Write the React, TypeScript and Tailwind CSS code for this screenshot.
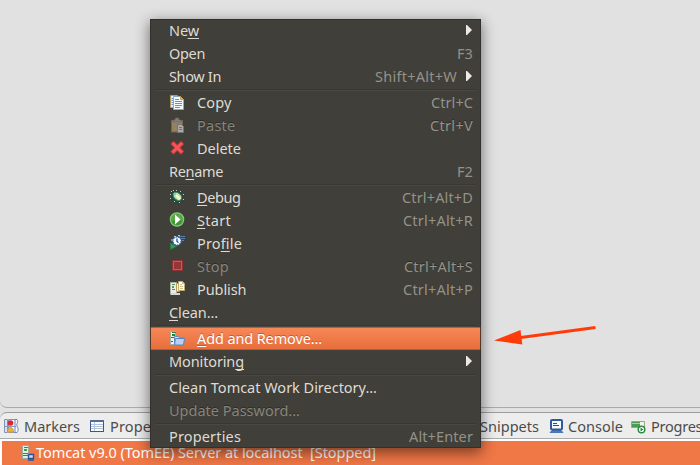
import { useLayoutEffect, useRef } from 'react';
import type { ReactNode } from 'react';

/** Text run whose tracking is adjusted so that it takes up the given width. */
function Fit({ w, children, className = '' }: { w: number; children: ReactNode; className?: string }) {
  const ref = useRef<HTMLSpanElement>(null);
  useLayoutEffect(() => {
    const el = ref.current;
    if (!el) return;
    el.style.letterSpacing = '0px';
    const n = (el.textContent ?? '').length;
    el.style.letterSpacing = `${(w - el.getBoundingClientRect().width) / n}px`;
  }, [w]);
  return (
    <span ref={ref} className={`inline-block whitespace-pre ${className}`}>
      {children}
    </span>
  );
}

function Svg({ children, className = '' }: { children: ReactNode; className?: string }) {
  return (
    <svg viewBox="0 0 16 16" className={`size-4 shrink-0 ${className}`}>
      {children}
    </svg>
  );
}

const CopyIcon = () => (
  <Svg>
    <path d="M1.500 1.500h7v12h-7z" fill="#e8eef5" stroke="#b59a5b" />
    <path d="M2.500 4.500h2M2.500 6.500h2M2.500 8.500h2M2.500 10.500h2" stroke="#6d94bf" />
    <path d="M4.500 2.500h7l3 3v10h-10z" fill="#f4f9ff" stroke="#8ba9c4" />
    <path d="M11.500 2.500v3h3z" fill="#edc568" stroke="#c19a43" />
    <path d="M6 5.500h4M6 7.500h7M6 9.500h7M6 11.500h7M6 13.500h5" stroke="#6592c3" />
  </Svg>
);
const PasteIcon = () => (
  <Svg>
    <rect x="2.500" y="3.500" width="11" height="11.500" fill="#94815f" stroke="#76644a" />
    <path d="M4 5V3h2l.5-2h3l.5 2h2v2z" fill="#7d7d7b" stroke="#696966" strokeWidth=".6" />
    <path d="M8.500 7.500h4l2 2v6h-6z" fill="#a9aaa7" stroke="#6e7579" />
    <path d="M10 10.500h3M10 12.500h3" stroke="#667584" />
  </Svg>
);
const DeleteIcon = () => (
  <Svg>
    <path d="M4.500 4l7.500 7.500M12 4l-7.500 7.500" stroke="#c93236" strokeWidth="4.600" strokeLinecap="square" />
    <path d="M4.500 4l7.500 7.500M12 4l-7.500 7.500" stroke="#f4575a" strokeWidth="2.800" strokeLinecap="square" />
  </Svg>
);
const DebugIcon = () => (
  <Svg>
    <path
      d="M3 3l4 3M8 1v4M13 3l-3 2M1 6l5 1M2 10l4-1M4 13l3-3M8 11v3M13 7h2M12 11l2 2"
      stroke="#14504a"
      strokeWidth="1.500"
    />
    <path
      d="M2 2h1v1H2zM4 1h1v1H4zM7 1h1v1H7zM11 2h1v1h-1zM1 5h1v1H1zM1 9h1v1H1zM14 5h1v1h-1zM14 10h1v1h-1zM5 12h1v1H5zM10 13h1v1h-1z"
      fill="#b4d6c4"
    />
    <ellipse cx="8.500" cy="7.500" rx="4.600" ry="3.400" transform="rotate(40 8.500 7.500)" fill="#c5e7a4" stroke="#3d7d50" />
    <path d="M7 6l4 4" stroke="#f7ffe0" strokeWidth="2" />
    <circle cx="5.800" cy="5" r="1.500" fill="#8fcbb6" />
  </Svg>
);
const StartIcon = () => (
  <Svg>
    <circle cx="8" cy="7.500" r="6.700" fill="#55ab42" stroke="#8cc580" strokeWidth="1.200" />
    <path d="M2.500 8.500a5.600 5.600 0 0 0 11 0z" fill="#3f9731" />
    <path d="M6 2.500l5.500 5-5.500 5z" fill="#fff" />
  </Svg>
);
const ProfileIcon = () => (
  <Svg>
    <path d="M10 1.500h6M12 3.500h4M13 5.500h2" stroke="#5e7ca6" />
    <path d="M1.500 8l6 3.500-6 3z" fill="#3d9951" stroke="#237b3c" />
    <circle cx="8" cy="6" r="4.200" fill="#f8fbff" stroke="#3368a8" strokeWidth="1.400" strokeDasharray="1.800 .7" />
    <path d="M5 1.500h2M3 4v2M9 .5h2" stroke="#b5cee7" />
    <path d="M8 3.500v3l1.500 1" stroke="#173c78" strokeWidth="1.200" fill="none" />
  </Svg>
);
const StopIcon = () => (
  <Svg>
    <rect x="3.500" y="2.500" width="10" height="10" fill="#943c3d" stroke="#8e3335" />
    <rect x="4.500" y="3.500" width="8" height="8" fill="#963536" stroke="#ae6462" />
  </Svg>
);
const PublishIcon = () => (
  <Svg>
    <path d="M1.500 1.500h6v12h-6z" fill="#e9ede5" stroke="#a7aea4" />
    <path d="M3 3.500h3M3 8.500h3" stroke="#667e78" />
    <path d="M3 5h2v2H3z" fill="#42aa42" />
    <path d="M2 12h9v2H2z" fill="#d5d8cd" />
    <path d="M7.500 2.500h3v8h-3z" fill="#faf8e5" stroke="#b99b55" />
    <path d="M9.500 .5h4l2 2v7h-6z" fill="#fffdf1" stroke="#c6ab64" />
    <path d="M11 3.500h2M11 5.500h3M11 7.500h3" stroke="#c3c0a6" />
    <path d="M13 .5v2.500h2.500z" fill="#dfbd6b" />
  </Svg>
);
const AddIcon = () => (
  <Svg>
    <path d="M1.500 1.500h5v13h-5z" fill="#eef2e8" stroke="#a9b0a3" />
    <path d="M3 2.500h4M2 7.500h3M2 11.500h2" stroke="#4c6760" />
    <path d="M3 4h3v2H3z" fill="#198c25" />
    <path d="M5.500 6.500h4l1 1.500h4v6h-9z" fill="#d7e5fa" stroke="#668abb" />
    <path d="M6.500 8.500h9l-1 6.500H5.500z" fill="#b9d2f3" stroke="#5686c5" />
  </Svg>
);

type Row = {
  pre?: string;
  mnemonic?: string;
  post?: string;
  w: number;
  icon?: ReactNode;
  short?: string;
  sw?: number;
  off?: boolean;
  sub?: boolean;
  hot?: boolean;
};

const groups: Row[][] = [
  [
    { pre: 'Ne', mnemonic: 'w', w: 30, sub: true },
    { pre: 'Open', w: 36, short: 'F3', sw: 16 },
    { pre: 'Show In', w: 52, short: 'Shift+Alt+W', sw: 82, sub: true },
  ],
  [
    { pre: 'Copy', w: 34.5, icon: <CopyIcon />, short: 'Ctrl+C', sw: 42 },
    { pre: 'Paste', w: 38.5, icon: <PasteIcon />, short: 'Ctrl+V', sw: 43, off: true },
    { pre: 'Delete', w: 44, icon: <DeleteIcon /> },
    { pre: 'Re', mnemonic: 'n', post: 'ame', w: 54, short: 'F2', sw: 16 },
  ],
  [
    { mnemonic: 'D', post: 'ebug', w: 43.5, icon: <DebugIcon />, short: 'Ctrl+Alt+D', sw: 71 },
    { mnemonic: 'S', post: 'tart', w: 34, icon: <StartIcon />, short: 'Ctrl+Alt+R', sw: 70 },
    { pre: 'Pro', mnemonic: 'fi', post: 'le', w: 45, icon: <ProfileIcon /> },
    { pre: 'Stop', w: 32, icon: <StopIcon />, short: 'Ctrl+Alt+S', sw: 69, off: true },
    { pre: 'Publish', w: 49.5, icon: <PublishIcon />, short: 'Ctrl+Alt+P', sw: 70 },
    { mnemonic: 'C', post: 'lean...', w: 49 },
  ],
  [
    { mnemonic: 'A', post: 'dd and Remove...', w: 125, icon: <AddIcon />, hot: true },
    { pre: 'Monitorin', mnemonic: 'g', w: 75, sub: true },
  ],
  [
    { pre: 'Clean Tomcat Work Directory...', w: 208 },
    { pre: 'Update Password...', w: 131, off: true },
  ],
  [{ pre: 'Properties', w: 72, short: 'Alt+Enter', sw: 64 }],
];

function MenuRow({ r }: { r: Row }) {
  const tone = r.off
    ? 'text-[#87857b] [text-shadow:0_-1px_0_#2c2b27]'
    : r.hot
      ? 'text-white [text-shadow:0_-1px_0_#c45a30]'
      : 'text-[#dfdbd2]';
  return (
    <div
      className={`flex h-[23px] pr-2 pl-[19px] ${tone} ${
        r.hot ? 'bg-linear-to-b from-[#f98859] to-[#e66d38] shadow-[inset_0_0_0_1px_#c45a2c]' : ''
      }`}
    >
      {r.icon && <div className="w-7 shrink-0 pt-[3px]">{r.icon}</div>}
      <Fit w={r.w}>
        {r.pre}
        {r.mnemonic && (
          <span className="underline decoration-1 underline-offset-[2px] [text-decoration-skip-ink:none]">
            {r.mnemonic}
          </span>
        )}
        {r.post}
      </Fit>
      <div className="flex-1" />
      {r.short && (
        <Fit w={r.sw ?? 0} className="text-[#949288]">
          {r.short}
        </Fit>
      )}
      {r.sub && (
        <svg viewBox="0 0 6 10" className="mt-[6px] mr-[1px] ml-[9px] h-[10px] w-[6px]">
          <path d="M0 0h1l5 5-5 5H0z" fill="#eeeae1" />
        </svg>
      )}
    </div>
  );
}

function ContextMenu() {
  return (
    <div className="absolute top-[19px] left-[150px] w-[331px] bg-[#403f3a] shadow-[0_4px_13px_1px_rgba(0,0,0,0.48)]">
      {groups.map((g, i) => (
        <div key={i}>
          {i > 0 && (
            <div className="h-[3px] px-[5px] pt-px">
              <div className="h-px bg-[#383732]" />
              <div className="h-px bg-[#494843]" />
            </div>
          )}
          {g.map((r, j) => (
            <MenuRow key={j} r={r} />
          ))}
        </div>
      ))}
      <div className="pointer-events-none absolute inset-0 border border-[#2d2c28]/75" />
    </div>
  );
}

const MarkersIcon = () => (
  <Svg>
    <path d="M4.500 1.500h8v13h-8z" fill="#f2f5fc" stroke="#8196bc" />
    <path d="M.5 1.500h3v13h-3z" fill="#d5e0f1" stroke="#8094b7" />
    <path d="M11 1.500h2c2 3-1 4 0 6.500s2 4 0 6.500h-2z" fill="#f8faff" stroke="#6d85b3" />
    <circle cx="6.500" cy="5" r="2.800" fill="#e02632" />
    <path d="M3.500 14c0-2 1-4.500 3-4.500s3 2.500 3 4.500z" fill="#efb23d" stroke="#d29835" />
    <path d="M1 8.500h11" stroke="#8599bd" />
  </Svg>
);
const TableIcon = () => (
  <Svg>
    <rect x=".5" y="2.500" width="13" height="11" fill="#f8faff" stroke="#3f577f" />
    <path d="M0 2h14v2H0z" fill="#536c9a" />
    <path d="M4.500 4v9M1 6.500h12M1 8.500h12M1 10.500h12" stroke="#b4c2da" />
  </Svg>
);
const ConsoleIcon = () => (
  <Svg>
    <rect x="3" y="2" width="11" height="9.500" rx="1" fill="#f6faff" stroke="#2e5b9d" strokeWidth="2" />
    <path d="M5 5.500h4M5 7.500h6" stroke="#354d6c" />
    <path d="M4 12.500h9l2 2H2z" fill="#467bbc" stroke="#2b5c9e" strokeWidth=".7" />
  </Svg>
);
const ProgressIcon = () => (
  <Svg>
    <path d="M.5 3.500h13v6H.5z" fill="#f2f3ed" stroke="#a69d88" />
    <path d="M1 4h8v5H1z" fill="#4e9c54" />
    <path d="M1 5.500h8" stroke="#a5cf9d" />
    <circle cx="10.500" cy="11.500" r="3.300" fill="#fff" stroke="#2d8d43" strokeWidth="1.500" />
    <path d="M9.500 9.500l3 2-3 2z" fill="#278b3b" />
  </Svg>
);
const ServerIcon = () => (
  <Svg className="mt-[4px]">
    <path d="M2.500.5h6v13h-6z" fill="#e6eee6" stroke="#98aaa1" />
    <path d="M4 2.500h4M3 8.500h5M3 10.500h5" stroke="#566f68" />
    <path d="M4 4h3v2H4z" fill="#32a13e" />
    <path d="M8.500 9.500h5v4h-5z" fill="#c8ddf5" stroke="#28549a" strokeWidth="1.400" />
    <path d="M8 15h6" stroke="#28549a" strokeWidth="1.500" />
  </Svg>
);

function Tab({ icon, text, w, className }: { icon: ReactNode; text: string; w: number; className: string }) {
  return (
    <div className={`flex shrink-0 items-center gap-1 ${className}`}>
      {icon}
      <Fit w={w} className="pt-px">
        {text}
      </Fit>
    </div>
  );
}

export default function App() {
  return (
    <div className="relative flex h-[465px] w-[700px] flex-col overflow-hidden bg-[#e1e1e1] font-['Noto_Sans',sans-serif] text-[14.5px] leading-[23px] text-[#4c4c4c]">
      <div className="h-[408px] shrink-0 overflow-hidden">
        <div className="h-full w-[720px] rounded-bl-[7px] border-b border-[#aaa]" />
      </div>
      <div className="mt-1 h-[53px] w-[720px] shrink-0 rounded-tl-[7px] border-t border-[#9c9c9c] bg-[#ededed]">
        <div className="flex h-[26px] items-center border-b border-[#aaa]">
          <Tab icon={<MarkersIcon />} text="Markers" w={56} className="ml-1 w-[86px]" />
          <Tab icon={<TableIcon />} text="Properties" w={72} className="w-[370px]" />
          <Tab icon={<TableIcon />} text="Snippets" w={59} className="w-[88px]" />
          <Tab icon={<ConsoleIcon />} text="Console" w={55} className="w-[83px]" />
          <Tab icon={<ProgressIcon />} text="Progress" w={58} className="" />
        </div>
        <div className="h-[26px] bg-white pt-[2px] pl-[2px]">
          <div className="flex h-6 bg-[#f07746] pl-[18px] text-white">
            <ServerIcon />
            <Fit w={340}>{'Tomcat v9.0 (TomEE) Server at localhost  [Stopped]'}</Fit>
          </div>
        </div>
      </div>
      <svg viewBox="490 320 110 30" className="pointer-events-none absolute top-[320px] left-[490px] h-[30px] w-[110px]">
        <path d="M519 337.800L595.500 327.500" stroke="#ff3b0a" strokeWidth="3" />
        <path d="M494 340.500L520.500 330l1.800 14.500z" fill="#ff3b0a" />
      </svg>
      <ContextMenu />
    </div>
  );
}
